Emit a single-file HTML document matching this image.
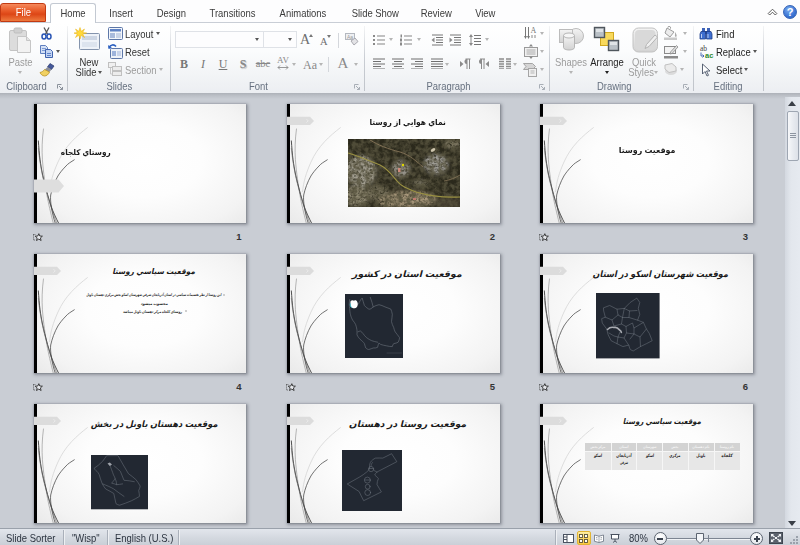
<!DOCTYPE html>
<html><head><meta charset="utf-8"><title>Slide Sorter</title>
<style>
html,body{margin:0;padding:0;}
body{width:800px;height:545px;overflow:hidden;position:relative;background:#c9cdd4;font-family:"Liberation Sans","DejaVu Sans",sans-serif;font-size:11px;color:#333;}
.abs{position:absolute;}
#tabs{position:absolute;left:0;top:0;width:800px;height:22px;background:#fdfdfe;}
#ribbon{position:absolute;left:0;top:22px;width:800px;height:71px;background:linear-gradient(#ffffff 0%,#fbfcfd 40%,#f2f4f6 75%,#eceef2 100%);border-top:1px solid #c9ced6;box-sizing:border-box;}
#under{position:absolute;left:0;top:93px;width:800px;height:6px;background:linear-gradient(#adb1b8 0%,#bcc0c7 45%,#c9cdd4 100%);}
.tab{position:absolute;top:3px;height:19px;line-height:20px;text-align:center;font-size:11px;color:#3a3a3a;}
#file{left:0;width:46px;top:3px;height:19px;border-radius:3px 3px 0 0;background:linear-gradient(#f5895c 0%,#e85a28 40%,#dd4616 60%,#ee7a3e 100%);color:#fff;border:1px solid #c23a12;box-sizing:border-box;line-height:17px;}
#home{left:50px;width:46px;height:20px;background:#fff;border:1px solid #c3c9d2;border-bottom:none;border-radius:3px 3px 0 0;box-sizing:border-box;line-height:19px;}
.sep{position:absolute;top:26px;height:65px;width:1px;background:linear-gradient(rgba(200,204,210,0.2),#c9cdd3 50%,#c0c4ca);}
.glabel{position:absolute;top:80px;height:13px;line-height:13px;font-size:11px;color:#66707f;text-align:center;}
.t{position:absolute;white-space:nowrap;line-height:13px;font-size:10.5px;transform:scaleX(.9);transform-origin:0 50%;}
.t[style*="text-align:center"]{transform-origin:50% 50%;}
.sx{display:inline-block;transform:scaleX(.9);transform-origin:50% 50%;font-size:10.5px;}
.dis{color:#9c9c9c;}
.ser{font-family:"Liberation Serif",serif;}
.arr{position:absolute;width:0;height:0;border-left:2.5px solid transparent;border-right:2.5px solid transparent;border-top:3px solid #555;}

.slide{position:absolute;width:212.5px;height:119px;overflow:hidden;background:radial-gradient(ellipse 78% 88% at 52% 47%,#ffffff 0%,#fdfdfd 35%,#f3f3f3 70%,#e3e3e3 100%);box-shadow:0 0 1.5px 0.5px rgba(80,85,95,.6),1px 1px 3px 1px rgba(80,85,95,.45);}
.bar{position:absolute;left:0;top:0;width:3.2px;height:120px;background:#000;}
.wisp{position:absolute;left:0;top:0;}
.ttl{position:absolute;white-space:nowrap;direction:rtl;font-family:"Liberation Sans","DejaVu Sans",sans-serif;font-weight:bold;color:#1a1a1a;line-height:20px;height:20px;transform-origin:100% 50%;}
.num{position:absolute;width:20px;text-align:right;font-weight:bold;font-size:9.500px;color:#333;line-height:13px;}
.bd{position:absolute;white-space:nowrap;direction:rtl;font-weight:bold;color:#2a2a2a;line-height:10px;height:10px;transform-origin:100% 50%;}
.cell{position:absolute;width:60px;text-align:center;white-space:nowrap;direction:rtl;font-weight:bold;line-height:10px;height:10px;transform-origin:50% 50%;}
</style></head><body>
<div id="tabs"></div>
<div id="ribbon"></div>
<div id="under"></div>
<div class="tab" id="file"><span class="sx">File</span></div>
<div class="tab" id="home"><span class="sx">Home</span></div>
<div class="tab" style="left:103px;width:36px"><span class="sx">Insert</span></div>
<div class="tab" style="left:151px;width:40px"><span class="sx">Design</span></div>
<div class="tab" style="left:202px;width:60px"><span class="sx">Transitions</span></div>
<div class="tab" style="left:274px;width:58px"><span class="sx">Animations</span></div>
<div class="tab" style="left:346px;width:58px"><span class="sx">Slide Show</span></div>
<div class="tab" style="left:416px;width:40px"><span class="sx">Review</span></div>
<div class="tab" style="left:470px;width:30px"><span class="sx">View</span></div>
<!--RIBBON-->
<!-- separators -->
<div class="sep" style="left:67px"></div><div class="sep" style="left:170px"></div><div class="sep" style="left:364px"></div><div class="sep" style="left:549px"></div><div class="sep" style="left:693px"></div><div class="sep" style="left:763px"></div>
<!-- group labels -->
<div class="glabel" style="left:0;width:52px"><span class="sx">Clipboard</span></div>
<div class="glabel" style="left:68px;width:102px"><span class="sx">Slides</span></div>
<div class="glabel" style="left:171px;width:176px"><span class="sx">Font</span></div>
<div class="glabel" style="left:365px;width:168px"><span class="sx">Paragraph</span></div>
<div class="glabel" style="left:550px;width:128px"><span class="sx">Drawing</span></div>
<div class="glabel" style="left:694px;width:69px"><span class="sx">Editing</span></div>
<!-- launchers -->
<svg class="abs" style="left:56px;top:83px" width="8" height="8" viewBox="0 0 8 8"><path d="M1.5 5.5V1.5H5.5" fill="none" stroke="#8a919b"/><path d="M3 3l3.5 3.5M6.5 4v2.5H4" fill="none" stroke="#8a919b"/></svg>
<svg class="abs" style="left:353px;top:83px" width="8" height="8" viewBox="0 0 8 8"><path d="M1.5 5.5V1.5H5.5" fill="none" stroke="#a8aeb6"/><path d="M3 3l3.5 3.5M6.5 4v2.5H4" fill="none" stroke="#a8aeb6"/></svg>
<svg class="abs" style="left:538px;top:83px" width="8" height="8" viewBox="0 0 8 8"><path d="M1.5 5.5V1.5H5.5" fill="none" stroke="#a8aeb6"/><path d="M3 3l3.5 3.5M6.5 4v2.5H4" fill="none" stroke="#a8aeb6"/></svg>
<svg class="abs" style="left:682px;top:83px" width="8" height="8" viewBox="0 0 8 8"><path d="M1.5 5.5V1.5H5.5" fill="none" stroke="#a8aeb6"/><path d="M3 3l3.5 3.5M6.5 4v2.5H4" fill="none" stroke="#a8aeb6"/></svg>
<!-- CLIPBOARD -->
<svg class="abs" style="left:8px;top:27px" width="25" height="27" viewBox="0 0 25 27">
 <rect x="1.5" y="3.5" width="17" height="20" rx="1.5" fill="#dcdcdc" stroke="#c4c4c4"/>
 <rect x="6" y="1" width="8" height="5" rx="1.5" fill="#cfcfcf" stroke="#bdbdbd"/>
 <path d="M9.5 9.500H18.500L22.500 13.500V25.500H9.500Z" fill="#f2f2f2" stroke="#c6c6c6"/>
 <path d="M18.500 9.500V13.500H22.500" fill="#e4e4e4" stroke="#c6c6c6"/>
</svg>
<div class="t dis" style="left:0;width:41px;text-align:center;top:56px">Paste</div>
<div class="arr dis" style="left:18px;top:71px;border-top-color:#b5b5b5"></div>
<svg class="abs" style="left:41px;top:27px" width="11" height="13" viewBox="0 0 11 13">
 <path d="M3 0.500L6.500 7M8 0.500L4.500 7" stroke="#555" stroke-width="1.300" fill="none"/>
 <ellipse cx="3" cy="9.500" rx="2" ry="2.500" fill="none" stroke="#2a56b5" stroke-width="1.500"/>
 <ellipse cx="8" cy="9.500" rx="2" ry="2.500" fill="none" stroke="#2a56b5" stroke-width="1.500"/>
</svg>
<svg class="abs" style="left:39px;top:45px" width="15" height="13" viewBox="0 0 15 13">
 <path d="M1.500 0.500H6.500L8.500 2.500V8.500H1.500Z" fill="#d4e0f5" stroke="#5f7fbf"/><path d="M3 3.500h4M3 5.500h4" stroke="#7d9ad3"/>
 <path d="M6.500 4.500H11.500L13.500 6.500V12.500H6.500Z" fill="#c3d4f2" stroke="#3f62ad"/>
 <path d="M8 8.500h4M8 10.500h4" stroke="#5f82c9"/>
</svg>
<div class="arr" style="left:56px;top:50px"></div>
<svg class="abs" style="left:39px;top:62px" width="17" height="15" viewBox="0 0 17 15">
 <path d="M11 1.500l4 2.500-2.500 3.500-4-2.500z" fill="#44589a" stroke="#2b3a6d" stroke-width=".7"/>
 <path d="M8.500 5l4 2.500-2 2.500-5-2z" fill="#8d8f99"/>
 <path d="M5.500 7.500l5 2.500c-1 2.500-3 4-5 4-2-.2-4-1.800-4.500-3.500 2-.5 3.500-1.500 4.500-3z" fill="#f1d162" stroke="#b99222" stroke-width=".8"/>
</svg>
<!-- SLIDES -->
<svg class="abs" style="left:74px;top:27px" width="28" height="25" viewBox="0 0 28 25">
 <rect x="5.500" y="6.500" width="20" height="16" rx="1" fill="#eef2f8" stroke="#8494ad"/>
 <rect x="8" y="9" width="15" height="4" fill="#cdd6e4"/><rect x="8" y="15" width="15" height="5" fill="#dde4ee"/>
 <path d="M6 0.500l1.200 3.800 3.300-2.300-1.800 3.500 4 .5-4 1 1.800 3.500-3.300-2.300-1.200 3.800-1.200-3.800-3.300 2.300 1.800-3.500-3.800-1 3.800-.5-1.800-3.500 3.300 2.300z" fill="#ffd93b" stroke="#e8b010" stroke-width=".5"/>
</svg>
<div class="t" style="left:68px;width:42px;text-align:center;top:56px">New</div>
<div class="t" style="left:68px;width:36px;text-align:center;top:66px">Slide</div>
<div class="arr" style="left:98px;top:71px"></div>
<svg class="abs" style="left:108px;top:27px" width="15" height="13" viewBox="0 0 15 13">
 <rect x="0.500" y="0.500" width="14" height="12" rx="1" fill="#f3f6fb" stroke="#5d77a8"/>
 <rect x="2" y="2" width="11" height="2.500" fill="#5f82c4"/><rect x="2" y="6" width="5" height="5" fill="#a9bbdc"/><rect x="8" y="6" width="5" height="5" fill="#c9d4e8"/>
</svg>
<div class="t" style="left:125px;top:28px">Layout</div><div class="arr" style="left:156px;top:32px"></div>
<svg class="abs" style="left:108px;top:44px" width="15" height="15" viewBox="0 0 15 15">
 <rect x="2.500" y="4.500" width="12" height="10" rx="1" fill="#eef2f8" stroke="#5d77a8"/>
 <rect x="4" y="7" width="4" height="5" fill="#9db3db"/><rect x="9" y="7" width="4" height="5" fill="#c7d3ea"/>
 <path d="M1 3.500c1.500-3 5-3.500 7-1" fill="none" stroke="#2a5fc0" stroke-width="1.600"/><path d="M0 1l.5 4 3.500-1z" fill="#2a5fc0"/>
</svg>
<div class="t" style="left:125px;top:46px">Reset</div>
<svg class="abs" style="left:108px;top:62px" width="15" height="15" viewBox="0 0 15 15">
 <rect x="0.500" y="0.500" width="7" height="5" fill="#f0f0f0" stroke="#c0c0c0"/>
 <rect x="4.500" y="4.500" width="9" height="4" fill="#ececec" stroke="#c0c0c0"/>
 <rect x="4.500" y="9.500" width="9" height="4" fill="#ececec" stroke="#c0c0c0"/>
 <path d="M2.500 6v6h2" fill="none" stroke="#c8c8c8"/>
</svg>
<div class="t dis" style="left:125px;top:64px">Section</div><div class="arr" style="left:159px;top:68px;border-top-color:#b5b5b5"></div>
<!-- FONT -->
<div class="abs" style="left:175px;top:31px;width:122px;height:17px;box-sizing:border-box;border:1px solid #dfe2e7;background:#fdfdfe"></div>
<div class="abs" style="left:263px;top:32px;width:1px;height:15px;background:#dfe2e7"></div>
<div class="arr" style="left:255px;top:38px"></div><div class="arr" style="left:288px;top:38px"></div>
<div class="abs ser" style="left:300px;top:33px;font-size:14px;color:#6e6e6e;line-height:14px">A</div>
<div class="abs" style="left:309px;top:34px;width:0;height:0;border-left:2px solid transparent;border-right:2px solid transparent;border-bottom:3px solid #777"></div>
<div class="abs ser" style="left:320px;top:36px;font-size:10.500px;color:#6e6e6e;line-height:11px">A</div>
<div class="abs" style="left:327px;top:35px;width:0;height:0;border-left:2px solid transparent;border-right:2px solid transparent;border-top:3px solid #777"></div>
<div class="abs" style="left:338px;top:33px;width:1px;height:15px;background:#d4d7dc"></div>
<svg class="abs" style="left:344px;top:32px" width="15" height="15" viewBox="0 0 15 15">
 <rect x="1.500" y="1.500" width="9" height="6" fill="#eef0f3" stroke="#b4b8bf"/><text x="3" y="7" font-size="5" font-family="Liberation Sans" fill="#999">Aa</text>
 <path d="M7 9l4-3 3 3.500-4 3.500z" fill="#e3e3e6" stroke="#a9a9b0"/>
</svg>
<div class="abs ser" style="left:179px;top:57px;width:10px;text-align:center;font-weight:bold;font-size:12px;color:#777;line-height:14px">B</div>
<div class="abs ser" style="left:198px;top:57px;width:10px;text-align:center;font-style:italic;font-size:12px;color:#777;line-height:14px">I</div>
<div class="abs ser" style="left:218px;top:57px;width:10px;text-align:center;text-decoration:underline;font-size:12px;color:#777;line-height:14px">U</div>
<div class="abs ser" style="left:238px;top:57px;width:10px;text-align:center;font-weight:bold;font-size:12px;color:#888;line-height:14px;text-shadow:1px 1px 1px #bbb">S</div>
<div class="abs ser" style="left:255px;top:57px;width:16px;text-align:center;text-decoration:line-through;font-size:10.500px;color:#888;line-height:14px">abc</div>
<div class="abs ser" style="left:276px;top:55px;width:14px;text-align:center;font-size:9px;color:#888;line-height:10px">AV</div>
<svg class="abs" style="left:277px;top:65px" width="12" height="5" viewBox="0 0 12 5"><path d="M1 2.500h10M3 0.500l-2 2 2 2M9 0.500l2 2-2 2" fill="none" stroke="#8d8d8d" stroke-width=".9"/></svg>
<div class="arr" style="left:292px;top:63px;border-top-color:#b5b5b5"></div>
<div class="abs ser" style="left:302px;top:58px;width:16px;text-align:center;font-size:12px;color:#888;line-height:14px">Aa</div>
<div class="arr" style="left:319px;top:63px;border-top-color:#b5b5b5"></div>
<div class="abs" style="left:328px;top:57px;width:1px;height:15px;background:#d4d7dc"></div>
<div class="abs ser" style="left:336px;top:55px;width:14px;text-align:center;font-size:15px;color:#8a8a8a;line-height:16px">A</div>
<div class="arr" style="left:354px;top:63px;border-top-color:#b5b5b5"></div>
<!-- PARAGRAPH row 1 -->
<svg class="abs" style="left:373px;top:34px" width="12" height="12" viewBox="0 0 12 12"><g fill="#8a8a8a"><rect x="0" y="1" width="2" height="2"/><rect x="0" y="5" width="2" height="2"/><rect x="0" y="9" width="2" height="2"/></g><path d="M4 2h8M4 6h8M4 10h8" stroke="#858585"/></svg>
<div class="arr" style="left:389px;top:38px;border-top-color:#b5b5b5"></div>
<svg class="abs" style="left:400px;top:34px" width="13" height="12" viewBox="0 0 13 12"><g fill="#8a8a8a"><rect x="0.500" y="0.500" width="1.500" height="3"/><rect x="0" y="4.500" width="2" height="3"/><rect x="0" y="8.500" width="2" height="3"/></g><path d="M4 2h8M4 6h8M4 10h8" stroke="#858585"/></svg>
<div class="arr" style="left:417px;top:38px;border-top-color:#b5b5b5"></div>
<svg class="abs" style="left:431px;top:34px" width="13" height="12" viewBox="0 0 13 12"><path d="M1 1h11M5 3.500h7M5 6h7M5 8.500h7M1 11h11" stroke="#777"/><path d="M3.500 3.500v5L0.500 6z" fill="#8a8a8a"/></svg>
<svg class="abs" style="left:449px;top:34px" width="13" height="12" viewBox="0 0 13 12"><path d="M1 1h11M5 3.500h7M5 6h7M5 8.500h7M1 11h11" stroke="#777"/><path d="M0.500 3.500v5L3.500 6z" fill="#8a8a8a"/></svg>
<svg class="abs" style="left:469px;top:33px" width="12" height="14" viewBox="0 0 12 14"><path d="M5 2.500h7M5 5.500h7M5 8.500h7M5 11.500h7" stroke="#777"/><path d="M2 1l2 3h-4zM2 13l2-3h-4z" fill="#8a8a8a"/><path d="M2 3v8" stroke="#8a8a8a"/></svg>
<div class="arr" style="left:485px;top:38px;border-top-color:#b5b5b5"></div>
<!-- PARAGRAPH row 2 -->
<svg class="abs" style="left:373px;top:58px" width="12" height="11" viewBox="0 0 12 11"><path d="M0 1h12M0 3.500h8M0 6h12M0 8.500h8M0 11h12" stroke="#6f6f6f" stroke-width="1.15"/></svg>
<svg class="abs" style="left:392px;top:58px" width="12" height="11" viewBox="0 0 12 11"><path d="M0 1h12M2 3.500h8M0 6h12M2 8.500h8M0 11h12" stroke="#6f6f6f" stroke-width="1.15"/></svg>
<svg class="abs" style="left:411px;top:58px" width="12" height="11" viewBox="0 0 12 11"><path d="M0 1h12M4 3.500h8M0 6h12M4 8.500h8M0 11h12" stroke="#6f6f6f" stroke-width="1.15"/></svg>
<svg class="abs" style="left:431px;top:58px" width="12" height="11" viewBox="0 0 12 11"><path d="M0 1h12M0 3.500h12M0 6h12M0 8.500h12M0 11h12" stroke="#6f6f6f" stroke-width="1.15"/></svg>
<div class="arr" style="left:445px;top:63px;border-top-color:#b5b5b5"></div>
<svg class="abs" style="left:459px;top:58px" width="12" height="12" viewBox="0 0 12 12"><path d="M1 3l3.500 3-3.500 3z" fill="#8a8a8a"/><path d="M8 1v10M10.500 1v10M6.500 1h5" stroke="#8a8a8a"/><path d="M8 1a2.500 2.500 0 0 0 0 5z" fill="#8a8a8a"/></svg>
<svg class="abs" style="left:478px;top:58px" width="12" height="12" viewBox="0 0 12 12"><path d="M11 3l-3.500 3 3.500 3z" fill="#8a8a8a"/><path d="M3.500 1v10M6 1v10M2 1h5" stroke="#8a8a8a"/><path d="M3.500 1a2.500 2.500 0 0 0 0 5z" fill="#8a8a8a"/></svg>
<svg class="abs" style="left:499px;top:58px" width="12" height="11" viewBox="0 0 12 11"><path d="M0 1h5M0 3.500h5M0 6h5M0 8.500h5M0 11h5M7 1h5M7 3.500h5M7 6h5M7 8.500h5M7 11h5" stroke="#8c8c8c" stroke-width="1.300"/></svg>
<div class="arr" style="left:513px;top:63px;border-top-color:#b5b5b5"></div>
<!-- PARAGRAPH right column -->
<svg class="abs" style="left:524px;top:26px" width="14" height="14" viewBox="0 0 14 14"><path d="M1.500 1v10M4.500 1v10" stroke="#777"/><path d="M1.500 13l-1.500-3h3zM4.500 13l-1.500-3h3z" fill="#777"/><text x="6.500" y="7" font-size="8" font-family="Liberation Serif" fill="#777">A</text><path d="M8 9v3M11 9v3" stroke="#888"/></svg>
<div class="arr" style="left:540px;top:32px;border-top-color:#b5b5b5"></div>
<svg class="abs" style="left:524px;top:44px" width="14" height="15" viewBox="0 0 14 15"><rect x="0.500" y="3.500" width="13" height="9" fill="#f1f1f1" stroke="#9a9a9a"/><path d="M2.500 6h9M2.500 8h9M2.500 10h9" stroke="#aaa"/><path d="M7 0l2 2.500h-4zM7 15l2-2.500h-4z" fill="#888"/></svg>
<div class="arr" style="left:540px;top:50px;border-top-color:#b5b5b5"></div>
<svg class="abs" style="left:523px;top:62px" width="15" height="15" viewBox="0 0 15 15"><path d="M0.500 1.500h9l3 3-3 3h-9l2.500-3z" fill="#d5d5d5" stroke="#a5a5a5"/><rect x="5.500" y="6.500" width="8" height="8" fill="#f0f0f0" stroke="#a5a5a5"/><path d="M7.500 9h4M7.500 11h4" stroke="#b5b5b5"/></svg>
<div class="arr" style="left:540px;top:68px;border-top-color:#b5b5b5"></div>
<!-- DRAWING -->
<svg class="abs" style="left:558px;top:27px" width="27" height="25" viewBox="0 0 27 25">
 <defs><linearGradient id="gs" x1="0" y1="0" x2="0" y2="1"><stop offset="0" stop-color="#f4f4f4"/><stop offset="1" stop-color="#d2d2d2"/></linearGradient></defs>
 <circle cx="18" cy="9" r="7.500" fill="url(#gs)" stroke="#bdbdbd"/>
 <rect x="1.500" y="2.500" width="13" height="13" fill="url(#gs)" stroke="#bcbcbc"/>
 <path d="M5.500 8.500v12a5.500 2.500 0 0 0 11 0v-12" fill="url(#gs)" stroke="#b5b5b5"/><ellipse cx="11" cy="8.500" rx="5.500" ry="2.500" fill="#f6f6f6" stroke="#b5b5b5"/>
</svg>
<div class="t dis" style="left:551px;width:40px;text-align:center;top:56px">Shapes</div>
<div class="arr" style="left:569px;top:71px;border-top-color:#b5b5b5"></div>
<svg class="abs" style="left:593px;top:26px" width="28" height="27" viewBox="0 0 28 27">
 <rect x="7.500" y="6.500" width="13" height="13" fill="#f8d95c" stroke="#d1a81f"/>
 <rect x="1.500" y="1.500" width="10" height="10" fill="#b9c0c6" stroke="#4f565d" stroke-width="1.400"/><rect x="3" y="3" width="7" height="3" fill="#dfe3e6"/>
 <rect x="15.500" y="14.500" width="10" height="10" fill="#b9c0c6" stroke="#4f565d" stroke-width="1.400"/><rect x="17" y="16" width="7" height="3" fill="#dfe3e6"/>
</svg>
<div class="t" style="left:585px;width:44px;text-align:center;top:56px;color:#222">Arrange</div>
<div class="arr" style="left:605px;top:71px;border-top-color:#222"></div>
<svg class="abs" style="left:632px;top:27px" width="27" height="26" viewBox="0 0 27 26">
 <rect x="1" y="1" width="24.500" height="24" rx="5.500" fill="url(#gs)" stroke="#c2c2c2"/><rect x="3" y="3" width="20.500" height="20" rx="4" fill="#d9d9d9"/>
 <path d="M23 8l2.500 2-8.500 9.500-4 2 1.500-4z" fill="#efefef" stroke="#b5b5b5"/>
</svg>
<div class="t dis" style="left:624px;width:40px;text-align:center;top:56px">Quick</div>
<div class="t dis" style="left:622px;width:38px;text-align:center;top:66px">Styles</div>
<div class="arr" style="left:654px;top:71px;border-top-color:#b5b5b5"></div>
<svg class="abs" style="left:663px;top:26px" width="16" height="14" viewBox="0 0 16 14"><path d="M4 2l7 4-4 5-5-4z" fill="#ececec" stroke="#9d9d9d"/><path d="M5 1.500c0-2 3-1.500 2.500 1" fill="none" stroke="#888"/><path d="M12 6c1.500 2 2 3.500 1.500 4.500-1 .8-2 0-1.500-1.500z" fill="#aaa"/><rect x="1" y="11.500" width="13" height="2.500" fill="#c9c9c9"/></svg>
<div class="arr" style="left:683px;top:32px;border-top-color:#b5b5b5"></div>
<svg class="abs" style="left:663px;top:45px" width="16" height="14" viewBox="0 0 16 14"><rect x="1.500" y="1.500" width="11" height="7" fill="#f3f3f3" stroke="#8a8a8a"/><path d="M13.500 0.500l1.500 1.500-6 6.500-2 .5.500-2z" fill="#ddd" stroke="#8a8a8a" stroke-width=".8"/><rect x="1" y="11" width="14" height="2.500" fill="#8a8a8a"/></svg>
<div class="arr" style="left:683px;top:50px;border-top-color:#b5b5b5"></div>
<svg class="abs" style="left:663px;top:62px" width="15" height="14" viewBox="0 0 15 14"><ellipse cx="8" cy="9" rx="6" ry="4" fill="#d0d0d0" opacity=".7"/><path d="M2 3l7-1.500 4 3.500v4l-7 1.500-4-3.500z" fill="#ebebeb" stroke="#c1c1c1"/></svg>
<div class="arr" style="left:680px;top:68px;border-top-color:#b5b5b5"></div>
<!-- EDITING -->
<svg class="abs" style="left:699px;top:27px" width="14" height="13" viewBox="0 0 14 13">
 <path d="M3 1h3v4h-3zM8 1h3v4h-3z" fill="#3d63b8"/><path d="M5.500 4h3v3h-3z" fill="#24427f"/>
 <path d="M2 4.500h4.500v7.500h-5.500v-5zM12 4.500h-4.500v7.500h5.500v-5z" fill="#3f6fd0" stroke="#1f3f8a" stroke-width=".8"/>
 <path d="M2.500 7v4M9 7v4" stroke="#b9cdf2"/>
</svg>
<div class="t" style="left:716px;top:28px;color:#222">Find</div>
<svg class="abs" style="left:699px;top:45px" width="15" height="14" viewBox="0 0 15 14">
 <text x="1" y="6" font-size="7.500" font-family="Liberation Serif" fill="#444">ab</text>
 <text x="6" y="13" font-size="7.500" font-weight="bold" font-family="Liberation Sans" fill="#2f8a2f">ac</text>
 <path d="M2 7.500v3.500h3M3.500 9.500l1.500 1.500-1.500 1.500" fill="none" stroke="#3a5fb0" stroke-width=".9"/>
</svg>
<div class="t" style="left:716px;top:46px;color:#222">Replace</div><div class="arr" style="left:753px;top:50px"></div>
<svg class="abs" style="left:701px;top:63px" width="10" height="14" viewBox="0 0 10 14"><path d="M1.500 1v10l2.500-2.500 2 4.500 1.500-.7-2-4.300h3.500z" fill="#fff" stroke="#4a5568" stroke-width=".9"/></svg>
<div class="t" style="left:716px;top:64px;color:#222">Select</div><div class="arr" style="left:744px;top:68px"></div>
<!-- help + caret -->
<svg class="abs" style="left:767px;top:6px" width="11" height="11" viewBox="0 0 11 11"><path d="M1.200 7.500L5.500 3.200L9.800 7.500L8.300 9L5.500 6.200L2.700 9Z" fill="#fff" stroke="#4a4a4a" stroke-width=".9" stroke-linejoin="round"/></svg>
<div class="abs" style="left:783px;top:5px;width:14px;height:14px;border-radius:50%;background:radial-gradient(circle at 40% 30%,#7fb0f0,#3b74d4 60%,#2a5cba);border:1px solid #3563b5;box-sizing:border-box;color:#fff;font-weight:bold;font-size:11px;line-height:12px;text-align:center">?</div>
<!--RIBBON4-->
<!--SLIDES-->
<div class="slide" style="left:33.5px;top:104.3px"><div class="bar"></div><svg class="wisp" width="70" height="120" viewBox="0 0 70 120"><path d="M53.700 23.400C43 31.700 31 42 24 58C19 69 16.500 78 15.500 88" fill="none" stroke="#d9d9d9" stroke-width=".9"/><path d="M9.500 24.600C8 36 7.800 46 8.400 55.600C9.500 70 11.500 82 13 91.400C14.500 100 16.500 108 19.500 120" fill="none" stroke="#888" stroke-width=".6"/><path d="M4.300 36.500C4.800 43 5.300 50 6 55.600C7.500 66 9 73 10.700 79.500C12.500 87 14.500 94 16.700 101C19 108 22 114 25 120" fill="none" stroke="#333" stroke-width=".85"/><path d="M4.300 44C5.500 56 7.500 68 10 78C13 90 17 104 23 120" fill="none" stroke="#666" stroke-width=".6"/><path d="M40.600 55.600C37 58 34 59.500 32 62C28 66 25.500 69.500 23.900 72C20.500 78 18 85 16.700 91C16 96 17.500 108 21.500 120" fill="none" stroke="#444" stroke-width=".75"/></svg><svg class="abs" style="left:0;top:75px" width="32" height="14" viewBox="0 0 32 14"><path d="M0 0.500H24.500L30 7L24.500 13.500H0Z" fill="#dedede"/></svg><div class="ttl" style="right:135.7px;top:38.4px;font-size:8px;transform:scaleX(0.911)">روستاي كلجاه</div></div>
<div class="slide" style="left:287px;top:104.3px"><div class="bar"></div><svg class="wisp" width="70" height="120" viewBox="0 0 70 120"><path d="M53.700 23.400C43 31.700 31 42 24 58C19 69 16.500 78 15.500 88" fill="none" stroke="#d9d9d9" stroke-width=".9"/><path d="M9.500 24.600C8 36 7.800 46 8.400 55.600C9.500 70 11.500 82 13 91.400C14.500 100 16.500 108 19.500 120" fill="none" stroke="#888" stroke-width=".6"/><path d="M4.300 36.500C4.800 43 5.300 50 6 55.600C7.500 66 9 73 10.700 79.500C12.500 87 14.500 94 16.700 101C19 108 22 114 25 120" fill="none" stroke="#333" stroke-width=".85"/><path d="M4.300 44C5.500 56 7.500 68 10 78C13 90 17 104 23 120" fill="none" stroke="#666" stroke-width=".6"/><path d="M40.600 55.600C37 58 34 59.500 32 62C28 66 25.500 69.500 23.900 72C20.500 78 18 85 16.700 91C16 96 17.500 108 21.500 120" fill="none" stroke="#444" stroke-width=".75"/></svg><svg class="abs" style="left:0;top:12px" width="29" height="10" viewBox="0 0 29 10"><path d="M0 0.800H23L27 4.900L23 9H0Z" fill="#dcdcdc"/><path d="M19.500 3.200l1.700 1.700-1.700 1.700" fill="none" stroke="#efefef" stroke-width=".8"/></svg><div class="ttl" style="right:53.5px;top:8.4px;font-size:8px;transform:scaleX(0.945)">نماي هوايي از روستا</div><svg class="abs" style="left:61px;top:35px" width="112" height="68" viewBox="0 0 112 68">
<defs>
<filter id="nzd" x="0" y="0" width="100%" height="100%"><feTurbulence type="fractalNoise" baseFrequency="0.22" numOctaves="3" seed="3" result="n"/><feColorMatrix in="n" type="matrix" values="0 0 0 0 0.100  0 0 0 0 0.090  0 0 0 0 0.050  0 2.2 1.6 0 -1.400"/></filter>
<filter id="tex" x="-10%" y="-10%" width="120%" height="120%"><feGaussianBlur in="SourceGraphic" stdDeviation="1.6" result="b"/><feTurbulence type="fractalNoise" baseFrequency="0.45" numOctaves="2" seed="11" result="n"/><feColorMatrix in="n" type="matrix" values="0 0 0 0 0  0 0 0 0 0  0 0 0 0 0  2.6 1.4 0 0 -1.250" result="na"/><feComposite in="b" in2="na" operator="in"/></filter>
<filter id="bl"><feGaussianBlur stdDeviation="2"/></filter>
<filter id="bl1"><feGaussianBlur stdDeviation="0.3"/></filter>
<clipPath id="c2"><rect width="112" height="68"/></clipPath>
</defs>
<g clip-path="url(#c2)">
<rect width="112" height="68" fill="#2b291c"/>
<g filter="url(#bl)" opacity=".55">
<ellipse cx="14" cy="34" rx="16" ry="16" fill="#6b6758"/>
<ellipse cx="10" cy="58" rx="14" ry="10" fill="#5e5946"/>
<ellipse cx="53" cy="30" rx="10" ry="9" fill="#5d5a4e"/>
<ellipse cx="88" cy="26" rx="13" ry="11" fill="#63615a"/>
<ellipse cx="62" cy="60" rx="28" ry="9" fill="#7c6f59"/>
<ellipse cx="100" cy="64" rx="14" ry="5" fill="#5a5040"/>
</g>
<g filter="url(#tex)">
<ellipse cx="13" cy="32" rx="15" ry="16" fill="#a19d8f"/>
<ellipse cx="8" cy="57" rx="13" ry="10" fill="#8f8972"/>
<ellipse cx="30" cy="54" rx="11" ry="8" fill="#77715b"/>
<ellipse cx="53" cy="30" rx="9" ry="9" fill="#96938a"/>
<ellipse cx="88" cy="25" rx="12" ry="10" fill="#a3a19b"/>
<ellipse cx="62" cy="60" rx="26" ry="8" fill="#a9987c"/>
<ellipse cx="40" cy="62" rx="10" ry="6" fill="#9c8e72"/>
<ellipse cx="104" cy="5" rx="8" ry="5" fill="#7d7762"/>
<ellipse cx="72" cy="44" rx="8" ry="4" fill="#6e6a58"/>
</g>
<rect width="112" height="68" filter="url(#nzd)" opacity=".8"/>
<g filter="url(#bl1)" fill="none">
<path d="M0 14C10 17 22 22 32 26C40 30 44 36 49 42C54 48 60 50 68 53C78 56 92 59 112 58" stroke="#9a9142" stroke-width="1.150"/>
<path d="M22 1C30 6 40 10 52 13C62 16 68 22 75 28" stroke="#8f7c5e" stroke-width=".8"/>
<path d="M96 42C102 41 107 39 112 36" stroke="#8f7c5e" stroke-width=".7"/>
</g>
<circle cx="55" cy="26" r="1.200" fill="#e0d800"/><rect x="50" y="29" width="2.500" height="4" fill="#cf8a7c"/><rect x="65" y="59" width="3" height="2" fill="#c07a6e"/>
<ellipse cx="85" cy="11" rx="2.500" ry="1.500" fill="#cfc6ae" transform="rotate(-30 85 11)"/>
</g>
</svg></div>
<div class="slide" style="left:540px;top:104.3px"><div class="bar"></div><svg class="wisp" width="70" height="120" viewBox="0 0 70 120"><path d="M53.700 23.400C43 31.700 31 42 24 58C19 69 16.500 78 15.500 88" fill="none" stroke="#d9d9d9" stroke-width=".9"/><path d="M9.500 24.600C8 36 7.800 46 8.400 55.600C9.500 70 11.500 82 13 91.400C14.500 100 16.500 108 19.500 120" fill="none" stroke="#888" stroke-width=".6"/><path d="M4.300 36.500C4.800 43 5.300 50 6 55.600C7.500 66 9 73 10.700 79.500C12.500 87 14.500 94 16.700 101C19 108 22 114 25 120" fill="none" stroke="#333" stroke-width=".85"/><path d="M4.300 44C5.500 56 7.500 68 10 78C13 90 17 104 23 120" fill="none" stroke="#666" stroke-width=".6"/><path d="M40.600 55.600C37 58 34 59.500 32 62C28 66 25.500 69.500 23.900 72C20.500 78 18 85 16.700 91C16 96 17.500 108 21.500 120" fill="none" stroke="#444" stroke-width=".75"/></svg><svg class="abs" style="left:0;top:12px" width="29" height="10" viewBox="0 0 29 10"><path d="M0 0.800H23L27 4.900L23 9H0Z" fill="#dcdcdc"/><path d="M19.500 3.200l1.700 1.700-1.700 1.700" fill="none" stroke="#efefef" stroke-width=".8"/></svg><div class="ttl" style="right:77.5px;top:36.4px;font-size:8px;transform:scaleX(0.986)">موقعيت روستا</div></div>
<div class="slide" style="left:33.5px;top:254.3px"><div class="bar"></div><svg class="wisp" width="70" height="120" viewBox="0 0 70 120"><path d="M53.700 23.400C43 31.700 31 42 24 58C19 69 16.500 78 15.500 88" fill="none" stroke="#d9d9d9" stroke-width=".9"/><path d="M9.500 24.600C8 36 7.800 46 8.400 55.600C9.500 70 11.500 82 13 91.400C14.500 100 16.500 108 19.500 120" fill="none" stroke="#888" stroke-width=".6"/><path d="M4.300 36.500C4.800 43 5.300 50 6 55.600C7.500 66 9 73 10.700 79.500C12.500 87 14.500 94 16.700 101C19 108 22 114 25 120" fill="none" stroke="#333" stroke-width=".85"/><path d="M4.300 44C5.500 56 7.500 68 10 78C13 90 17 104 23 120" fill="none" stroke="#666" stroke-width=".6"/><path d="M40.600 55.600C37 58 34 59.500 32 62C28 66 25.500 69.500 23.900 72C20.500 78 18 85 16.700 91C16 96 17.500 108 21.500 120" fill="none" stroke="#444" stroke-width=".75"/></svg><svg class="abs" style="left:0;top:12px" width="29" height="10" viewBox="0 0 29 10"><path d="M0 0.800H23L27 4.900L23 9H0Z" fill="#dcdcdc"/><path d="M19.500 3.200l1.700 1.700-1.700 1.700" fill="none" stroke="#efefef" stroke-width=".8"/></svg><div class="ttl" style="right:50.3px;top:7.9px;font-size:7.8px;transform:scaleX(0.946) skewX(-14deg)">موقعيت سياسي روستا</div><div class="bd" style="right:25.0px;top:36.0px;font-size:4px;transform:scaleX(0.654) skewX(-10deg)">اين روستا از نظر تقسيمات سياسي در استان آذربايجان شرقي شهرستان اسكو بخش مركزي دهستان باونل</div><div class="bd" style="right:78.0px;top:45.0px;font-size:4px;transform:scaleX(0.906) skewX(-10deg)">محسوب ميشود</div><div class="bd" style="right:64.0px;top:52.6px;font-size:4px;transform:scaleX(0.728) skewX(-10deg)">روستاي كلجاه مركز دهستان باونل ميباشد</div><div class="abs" style="left:189px;top:39.500px;width:2px;height:2px;background:#cfcfcf"></div><div class="abs" style="left:151px;top:56px;width:2px;height:2px;background:#cfcfcf"></div></div>
<div class="slide" style="left:287px;top:254.3px"><div class="bar"></div><svg class="wisp" width="70" height="120" viewBox="0 0 70 120"><path d="M53.700 23.400C43 31.700 31 42 24 58C19 69 16.500 78 15.500 88" fill="none" stroke="#d9d9d9" stroke-width=".9"/><path d="M9.500 24.600C8 36 7.800 46 8.400 55.600C9.500 70 11.500 82 13 91.400C14.500 100 16.500 108 19.500 120" fill="none" stroke="#888" stroke-width=".6"/><path d="M4.300 36.500C4.800 43 5.300 50 6 55.600C7.500 66 9 73 10.700 79.500C12.500 87 14.500 94 16.700 101C19 108 22 114 25 120" fill="none" stroke="#333" stroke-width=".85"/><path d="M4.300 44C5.500 56 7.500 68 10 78C13 90 17 104 23 120" fill="none" stroke="#666" stroke-width=".6"/><path d="M40.600 55.600C37 58 34 59.500 32 62C28 66 25.500 69.500 23.900 72C20.500 78 18 85 16.700 91C16 96 17.500 108 21.500 120" fill="none" stroke="#444" stroke-width=".75"/></svg><svg class="abs" style="left:0;top:12px" width="29" height="10" viewBox="0 0 29 10"><path d="M0 0.800H23L27 4.900L23 9H0Z" fill="#dcdcdc"/><path d="M19.500 3.200l1.700 1.700-1.700 1.700" fill="none" stroke="#efefef" stroke-width=".8"/></svg><div class="ttl" style="right:37.1px;top:9.7px;font-size:9px;transform:scaleX(1.049) skewX(-14deg)">موقعيت استان در كشور</div><svg class="abs" style="left:58px;top:40px" width="58" height="64" viewBox="0 0 58 64"><rect width="58" height="64" fill="#222832"/>
<g fill="none" stroke="#747a84" stroke-width=".55" stroke-linejoin="round" stroke-linecap="round">
<path d="M4.700 5.600C4 9 4.200 12 4.700 14.400C4.800 17 5 19 5.400 20.300C6 23 6.800 24.500 7.600 26.100C9 28 10 29 10.600 30.500C11.500 33 11.800 35 12 36.400C12 38 12 39.500 12 40.800C13 43 14 44 15 45.200C17 47 18.500 48 19.400 49.600C20 51.500 20.300 53 20.800 54C22 55 23 55.500 23.800 55.500C25.500 55 27 54.500 28.200 54C30 54 31.500 54 32.600 53.300C33 51.500 33.300 50 34 48.900C34.500 49.500 35 50 35.500 50.400C37.500 51 39.500 51.500 41.400 51.800C43.500 52.300 45.500 52.600 47.300 52.600C47.500 51.500 48 50.500 48.700 49.600C50.500 49.300 52 49 53.200 48.200C54 46.500 54.500 45 54.600 43.700C53 41.500 51.500 39.500 50.200 37.900C49.500 36.500 49 35 48.700 33.500C47.500 31.500 47 29.500 46.500 27.600C46.800 25 47.200 22.500 47.300 20.300C47 18.500 46.500 16.500 45.800 15.100C44 14.500 42 13.500 40 12.900C38 12 36 11 34 10.700C32 11 30 12 28.200 12.900C26.500 14.500 25 15.500 23.800 15.100C22 14 20.500 13 19.400 11.500C18.500 9 18 6.500 17.200 4.100C15.500 5.500 14.500 8 13.500 10"/>
<path d="M28.200 12.900C27.500 10 26.500 6.500 25.300 3.400"/>
<path d="M12.800 37.900C13.800 37.300 14.800 37 15.700 37.100C16.500 37.800 17.200 38.500 17.900 39.400C19 41 20.300 42.500 21.600 43.700C23.500 45 25 46 26.700 46.700C28.500 47.300 30.500 47.800 32.600 48.200"/>
<path d="M42 59h14.500" stroke="#5d636d" stroke-width=".4"/>
</g>
<path d="M5.600 7c1-1 2.500-1 3.500-.3 1.200-.8 2.800-.2 3.200 1.300.8 1.500.6 3.300-.2 4.700-1 1.300-2.500 1.800-4 1.500-1.300-.3-2.300-1.500-2.500-3-.3-1.500-.3-3 0-4.200z" fill="#ffffff"/><path d="M5.300 9.500c-.2 1.500.2 3.300 1.300 4.200" fill="none" stroke="#38d0e0" stroke-width=".9"/>
</svg></div>
<div class="slide" style="left:540px;top:254.3px"><div class="bar"></div><svg class="wisp" width="70" height="120" viewBox="0 0 70 120"><path d="M53.700 23.400C43 31.700 31 42 24 58C19 69 16.500 78 15.500 88" fill="none" stroke="#d9d9d9" stroke-width=".9"/><path d="M9.500 24.600C8 36 7.800 46 8.400 55.600C9.500 70 11.500 82 13 91.400C14.500 100 16.500 108 19.500 120" fill="none" stroke="#888" stroke-width=".6"/><path d="M4.300 36.500C4.800 43 5.300 50 6 55.600C7.500 66 9 73 10.700 79.500C12.500 87 14.500 94 16.700 101C19 108 22 114 25 120" fill="none" stroke="#333" stroke-width=".85"/><path d="M4.300 44C5.500 56 7.500 68 10 78C13 90 17 104 23 120" fill="none" stroke="#666" stroke-width=".6"/><path d="M40.600 55.600C37 58 34 59.500 32 62C28 66 25.500 69.500 23.900 72C20.500 78 18 85 16.700 91C16 96 17.500 108 21.500 120" fill="none" stroke="#444" stroke-width=".75"/></svg><svg class="abs" style="left:0;top:12px" width="29" height="10" viewBox="0 0 29 10"><path d="M0 0.800H23L27 4.900L23 9H0Z" fill="#dcdcdc"/><path d="M19.500 3.200l1.700 1.700-1.700 1.700" fill="none" stroke="#efefef" stroke-width=".8"/></svg><div class="ttl" style="right:23.5px;top:9.7px;font-size:9px;transform:scaleX(0.911) skewX(-14deg)">موقعيت شهرستان اسكو در استان</div><svg class="abs" style="left:56.400px;top:39px" width="63.600" height="65.400" viewBox="0 0 63.600 65.400"><rect width="63.600" height="65.400" fill="#222832"/>
<g fill="none" stroke="#6d737d" stroke-width=".55" stroke-linejoin="round" stroke-linecap="round">
<path d="M7.800 14.700L13.700 12.500L21 16.200L28.300 15.400L34.200 9.500L40.800 5.100L43.800 9.500L42.300 15.400L43.800 21.300L41.600 27.200L47.400 29.400L50.400 36L53.300 40.400L56.200 47.700L50.400 50.700L44.500 53.600L37.200 58L34.200 56.500L32.700 52.100L26.900 53.600L21 50.700L15.100 47.700L12.200 41.900L10.700 36L6.300 30.100L5.600 25.700L9.300 24.200L7.800 18.400Z"/>
<path d="M21 16.200L22 22L26.500 24.500L28.300 15.400M28.300 15.400L33.500 18L41 17.500M33.500 18L33 24.500L26.500 24.500M33 24.500L41.600 27.200M26.500 24.500L25.500 31L30 33.500L36.500 30L38 35L47.400 29.400M9.300 24.200L16 27L22 22M16 27L18 33M25.500 31L18 33M30 33.500L30.500 40L38 41L38 35M38 41L44 44L50.400 36M30.500 40L28 45L32.700 52.100M28 45L22 44L21 50.700M22 44L24 39M44 44L44.500 53.600M34 46L38 41M13 40L18 43L22 44"/>
</g>
<path d="M11.500 36.500C13.500 34.500 16 34 18 34.500C20 34 22 35 23 36.500C24.500 37.500 25.500 38.500 25.400 39.500" fill="none" stroke="#a9acb2" stroke-width="1.600" stroke-linecap="round"/>
</svg></div>
<div class="slide" style="left:33.5px;top:404.3px"><div class="bar"></div><svg class="wisp" width="70" height="120" viewBox="0 0 70 120"><path d="M53.700 23.400C43 31.700 31 42 24 58C19 69 16.500 78 15.500 88" fill="none" stroke="#d9d9d9" stroke-width=".9"/><path d="M9.500 24.600C8 36 7.800 46 8.400 55.600C9.500 70 11.500 82 13 91.400C14.500 100 16.500 108 19.500 120" fill="none" stroke="#888" stroke-width=".6"/><path d="M4.300 36.500C4.800 43 5.300 50 6 55.600C7.500 66 9 73 10.700 79.500C12.500 87 14.500 94 16.700 101C19 108 22 114 25 120" fill="none" stroke="#333" stroke-width=".85"/><path d="M4.300 44C5.500 56 7.500 68 10 78C13 90 17 104 23 120" fill="none" stroke="#666" stroke-width=".6"/><path d="M40.600 55.600C37 58 34 59.500 32 62C28 66 25.500 69.500 23.900 72C20.500 78 18 85 16.700 91C16 96 17.500 108 21.500 120" fill="none" stroke="#444" stroke-width=".75"/></svg><svg class="abs" style="left:0;top:12px" width="29" height="10" viewBox="0 0 29 10"><path d="M0 0.800H23L27 4.900L23 9H0Z" fill="#dcdcdc"/><path d="M19.500 3.200l1.700 1.700-1.700 1.700" fill="none" stroke="#efefef" stroke-width=".8"/></svg><div class="ttl" style="right:27.3px;top:9.7px;font-size:9px;transform:scaleX(0.931) skewX(-14deg)">موقعيت دهستان باونل در بخش</div><svg class="abs" style="left:57.500px;top:51px" width="57" height="54.300" viewBox="0 0 57 54.300"><rect width="57" height="54.300" fill="#222832"/>
<g fill="none" stroke="#6d737d" stroke-width=".55" stroke-linejoin="round" stroke-linecap="round">
<path d="M15.400 1C14 3 13 4.500 11.700 6.200C9 9 6 11.500 2.900 13.500C5 15.500 7 17 8.100 19.400C9 22.500 10 25.500 11 28.200C12 30.500 13.500 32.500 14.700 34C17.500 35.500 20.500 37 22.800 38.500C23.500 42 24.300 45.500 25 48.700C26 49.500 27.500 50 28.600 50.200C32.500 49 36.500 47.500 40.400 45.800C43 44.500 46 43 48.500 41.400C48.500 39.500 48 37.500 47.700 35.500C48.500 34 49 32.500 49.200 31.100C48 29 46.500 26.500 44.800 24.500C42.500 22.500 40 20.500 37.400 18.600C34 13 30.500 7 27.200 1Z"/>
<path d="M18.400 9.100C20 13 21.500 17 22.500 20C23.300 21.500 24 22.500 24.200 23.800C23 25.500 21.500 27 20.600 28.200C22.500 28.500 24 29 25.700 29.700C27.500 29.500 29.500 29.200 31.600 28.900M22.800 10.600C25 12.500 27.500 14.500 29.400 16.400C30.500 19.500 32 22.500 33 25.300C36.500 25.500 40 26 43.300 26.700M11.700 28.900C15.500 30.500 19.500 32 22.800 34C26 36.500 29.500 39 33 41.400M24.200 23.800C25 25 25.300 26.500 25.700 29.700"/>
</g>
<path d="M16.500 8.500L18.800 7.500L21 9.500L18.800 11Z" fill="#9ea2a9"/>
</svg></div>
<div class="slide" style="left:287px;top:404.3px"><div class="bar"></div><svg class="wisp" width="70" height="120" viewBox="0 0 70 120"><path d="M53.700 23.400C43 31.700 31 42 24 58C19 69 16.500 78 15.500 88" fill="none" stroke="#d9d9d9" stroke-width=".9"/><path d="M9.500 24.600C8 36 7.800 46 8.400 55.600C9.500 70 11.500 82 13 91.400C14.500 100 16.500 108 19.500 120" fill="none" stroke="#888" stroke-width=".6"/><path d="M4.300 36.500C4.800 43 5.300 50 6 55.600C7.500 66 9 73 10.700 79.500C12.500 87 14.500 94 16.700 101C19 108 22 114 25 120" fill="none" stroke="#333" stroke-width=".85"/><path d="M4.300 44C5.500 56 7.500 68 10 78C13 90 17 104 23 120" fill="none" stroke="#666" stroke-width=".6"/><path d="M40.600 55.600C37 58 34 59.500 32 62C28 66 25.500 69.500 23.900 72C20.500 78 18 85 16.700 91C16 96 17.500 108 21.500 120" fill="none" stroke="#444" stroke-width=".75"/></svg><svg class="abs" style="left:0;top:12px" width="29" height="10" viewBox="0 0 29 10"><path d="M0 0.800H23L27 4.900L23 9H0Z" fill="#dcdcdc"/><path d="M19.500 3.200l1.700 1.700-1.700 1.700" fill="none" stroke="#efefef" stroke-width=".8"/></svg><div class="ttl" style="right:32.7px;top:9.7px;font-size:9px;transform:scaleX(1.030) skewX(-14deg)">موقعيت روستا در دهستان</div><svg class="abs" style="left:55px;top:45.500px" width="60" height="61" viewBox="0 0 60 61"><rect width="60" height="61" fill="#222832"/>
<g fill="none" stroke="#6d737d" stroke-width=".55" stroke-linejoin="round" stroke-linecap="round">
<path d="M5.600 33.800L17.300 27.200C20 25.500 22.500 24 24.700 22C26 21 27 19.800 27.600 18.400C27.300 16.500 27.500 14.500 28.300 12.500C29.500 10.500 31.500 9 33.500 8.100C36 7.700 38.500 8.300 40.800 8.100L49.600 3.700L54.800 11.700L35 22C34 23 33 24 32.700 25C34 26 35.500 27.300 36.400 28.600C35.500 30.500 35 32.500 35 34.500C36.300 37 38 39.500 39.400 41.900L21.700 50.700C20 47.500 18.500 44.500 17.300 41.900Z"/>
<circle cx="29.100" cy="19.100" r="2.600"/><path d="M26.800 18.500h4.600"/><circle cx="25.400" cy="30.100" r="3"/><path d="M22.800 30h5.200"/><circle cx="25.700" cy="36.700" r="2.400"/><circle cx="25.700" cy="42.600" r="2.900"/>
<path d="M29 16.500C29 15 29.500 13.500 30.500 12.500M32 20.500L35 22"/>
</g>
</svg></div>
<div class="slide" style="left:540px;top:404.3px"><div class="bar"></div><svg class="wisp" width="70" height="120" viewBox="0 0 70 120"><path d="M53.700 23.400C43 31.700 31 42 24 58C19 69 16.500 78 15.500 88" fill="none" stroke="#d9d9d9" stroke-width=".9"/><path d="M9.500 24.600C8 36 7.800 46 8.400 55.600C9.500 70 11.500 82 13 91.400C14.500 100 16.500 108 19.500 120" fill="none" stroke="#888" stroke-width=".6"/><path d="M4.300 36.500C4.800 43 5.300 50 6 55.600C7.500 66 9 73 10.700 79.500C12.500 87 14.500 94 16.700 101C19 108 22 114 25 120" fill="none" stroke="#333" stroke-width=".85"/><path d="M4.300 44C5.500 56 7.500 68 10 78C13 90 17 104 23 120" fill="none" stroke="#666" stroke-width=".6"/><path d="M40.600 55.600C37 58 34 59.500 32 62C28 66 25.500 69.500 23.900 72C20.500 78 18 85 16.700 91C16 96 17.500 108 21.500 120" fill="none" stroke="#444" stroke-width=".75"/></svg><svg class="abs" style="left:0;top:12px" width="29" height="10" viewBox="0 0 29 10"><path d="M0 0.800H23L27 4.900L23 9H0Z" fill="#dcdcdc"/><path d="M19.500 3.200l1.700 1.700-1.700 1.700" fill="none" stroke="#efefef" stroke-width=".8"/></svg><div class="ttl" style="right:51.5px;top:7.9px;font-size:7.8px;transform:scaleX(0.894) skewX(-14deg)">موقعيت سياسي روستا</div><div class="abs" style="left:45.3px;top:38.4px;width:154.5px;height:8.600px;background:#d3d3d3"></div><div class="abs" style="left:45.3px;top:47.0px;width:154.5px;height:19px;background:#e7e7e7"></div><div class="abs" style="left:70.6px;top:38.4px;width:.8px;height:27.600px;background:#f6f6f6"></div><div class="abs" style="left:96.4px;top:38.4px;width:.8px;height:27.600px;background:#f6f6f6"></div><div class="abs" style="left:122.1px;top:38.4px;width:.8px;height:27.600px;background:#f6f6f6"></div><div class="abs" style="left:147.9px;top:38.4px;width:.8px;height:27.600px;background:#f6f6f6"></div><div class="abs" style="left:173.6px;top:38.4px;width:.8px;height:27.600px;background:#f6f6f6"></div><div class="abs" style="left:45.3px;top:46.6px;width:154.5px;height:.8px;background:#f6f6f6"></div><div class="cell" style="left:156.9px;top:37.7px;font-size:3.500px;color:#f4f4f4;transform:scaleX(0.846) skewX(-10deg)">نام روستا</div><div class="cell" style="left:131.2px;top:37.7px;font-size:3.500px;color:#f4f4f4;transform:scaleX(0.863) skewX(-10deg)">نام دهستان</div><div class="cell" style="left:105.4px;top:37.7px;font-size:3.500px;color:#f4f4f4;transform:scaleX(0.796) skewX(-10deg)">بخش</div><div class="cell" style="left:79.7px;top:37.7px;font-size:3.500px;color:#f4f4f4;transform:scaleX(0.760) skewX(-10deg)">شهرستان</div><div class="cell" style="left:53.9px;top:37.7px;font-size:3.500px;color:#f4f4f4;transform:scaleX(0.867) skewX(-10deg)">استان</div><div class="cell" style="left:28.2px;top:37.7px;font-size:3.500px;color:#f4f4f4;transform:scaleX(0.818) skewX(-10deg)">مركز بخش</div><div class="cell" style="left:156.9px;top:47.2px;font-size:4.500px;color:#222;transform:scaleX(0.913) skewX(-10deg)">كلجاه</div><div class="cell" style="left:131.2px;top:47.2px;font-size:4.500px;color:#222;transform:scaleX(0.757) skewX(-10deg)">باونل</div><div class="cell" style="left:105.4px;top:47.2px;font-size:4.500px;color:#222;transform:scaleX(0.727) skewX(-10deg)">مركزي</div><div class="cell" style="left:79.7px;top:47.2px;font-size:4.500px;color:#222;transform:scaleX(0.701) skewX(-10deg)">اسكو</div><div class="cell" style="left:53.9px;top:47.2px;font-size:4.500px;color:#222;transform:scaleX(0.739) skewX(-10deg)">آذربايجان</div><div class="cell" style="left:53.9px;top:53.6px;font-size:4.500px;color:#222;transform:scaleX(0.543) skewX(-10deg)">شرقي</div><div class="cell" style="left:28.2px;top:47.2px;font-size:4.500px;color:#222;transform:scaleX(0.701) skewX(-10deg)">اسكو</div></div>
<svg class="abs" style="left:32.5px;top:233.3px" width="10" height="9" viewBox="0 0 10 9"><path d="M5.800 0.700l1 2.300 2.600.2-2 1.700.7 2.600-2.300-1.400-2.300 1.400.7-2.600-2-1.700 2.600-.2z" fill="#e8eaee" stroke="#2e2e2e" stroke-width=".9"/><path d="M0.300 1.500h2.300M0.300 1.500v5.500h1.500" fill="none" stroke="#3a3a3a" stroke-width=".8" stroke-dasharray="1.2 .8"/></svg>
<div class="num" style="left:221.5px;top:229.8px">1</div>
<div class="num" style="left:475.0px;top:229.8px">2</div>
<svg class="abs" style="left:539px;top:233.3px" width="10" height="9" viewBox="0 0 10 9"><path d="M5.800 0.700l1 2.300 2.600.2-2 1.700.7 2.600-2.300-1.400-2.300 1.400.7-2.600-2-1.700 2.600-.2z" fill="#e8eaee" stroke="#2e2e2e" stroke-width=".9"/><path d="M0.300 1.500h2.300M0.300 1.500v5.500h1.500" fill="none" stroke="#3a3a3a" stroke-width=".8" stroke-dasharray="1.2 .8"/></svg>
<div class="num" style="left:728.0px;top:229.8px">3</div>
<svg class="abs" style="left:32.5px;top:383.3px" width="10" height="9" viewBox="0 0 10 9"><path d="M5.800 0.700l1 2.300 2.600.2-2 1.700.7 2.600-2.300-1.400-2.300 1.400.7-2.600-2-1.700 2.600-.2z" fill="#e8eaee" stroke="#2e2e2e" stroke-width=".9"/><path d="M0.300 1.500h2.300M0.300 1.500v5.500h1.500" fill="none" stroke="#3a3a3a" stroke-width=".8" stroke-dasharray="1.2 .8"/></svg>
<div class="num" style="left:221.5px;top:379.8px">4</div>
<svg class="abs" style="left:286px;top:383.3px" width="10" height="9" viewBox="0 0 10 9"><path d="M5.800 0.700l1 2.300 2.600.2-2 1.700.7 2.600-2.300-1.400-2.300 1.400.7-2.600-2-1.700 2.600-.2z" fill="#e8eaee" stroke="#2e2e2e" stroke-width=".9"/><path d="M0.300 1.500h2.300M0.300 1.500v5.500h1.500" fill="none" stroke="#3a3a3a" stroke-width=".8" stroke-dasharray="1.2 .8"/></svg>
<div class="num" style="left:475.0px;top:379.8px">5</div>
<svg class="abs" style="left:539px;top:383.3px" width="10" height="9" viewBox="0 0 10 9"><path d="M5.800 0.700l1 2.300 2.600.2-2 1.700.7 2.600-2.300-1.400-2.300 1.400.7-2.600-2-1.700 2.600-.2z" fill="#e8eaee" stroke="#2e2e2e" stroke-width=".9"/><path d="M0.300 1.500h2.300M0.300 1.500v5.500h1.500" fill="none" stroke="#3a3a3a" stroke-width=".8" stroke-dasharray="1.2 .8"/></svg>
<div class="num" style="left:728.0px;top:379.8px">6</div>
<!--SLIDESEND-->
<!--STATUS-->
<!-- scrollbar -->
<div class="abs" style="left:785px;top:97px;width:15px;height:432px;background:linear-gradient(90deg,#d3d8e0,#e3e7ed 40%,#e6eaf0)"></div>
<div class="abs" style="left:788px;top:101px;width:0;height:0;border-left:4.500px solid transparent;border-right:4.500px solid transparent;border-bottom:5px solid #3a3f47"></div>
<div class="abs" style="left:787px;top:111px;width:12px;height:50px;box-sizing:border-box;border:1px solid #9ea6b2;border-radius:2px;background:linear-gradient(90deg,#f7f8fa,#e8ebf0 50%,#dde1e8)"></div>
<div class="abs" style="left:790px;top:133px;width:6px;height:1px;background:#8d95a1;box-shadow:0 2px 0 #8d95a1,0 4px 0 #8d95a1"></div>
<div class="abs" style="left:788px;top:521px;width:0;height:0;border-left:4.500px solid transparent;border-right:4.500px solid transparent;border-top:5px solid #3a3f47"></div>
<!-- status bar -->
<div class="abs" style="left:0;top:528px;width:800px;height:18px;box-sizing:border-box;border-top:1px solid #9aa1ab;background:linear-gradient(#e2e6ec,#d3d8df 55%,#c9ced6)"></div>
<div class="t" style="left:6px;top:532px;color:#2c3440">Slide Sorter</div>
<div class="abs" style="left:63px;top:530px;width:1px;height:15px;background:#aab0ba;box-shadow:1px 0 0 #eef0f3"></div>
<div class="t" style="left:72px;top:532px;color:#2c3440">"Wisp"</div>
<div class="abs" style="left:107px;top:530px;width:1px;height:15px;background:#aab0ba;box-shadow:1px 0 0 #eef0f3"></div>
<div class="t" style="left:115px;top:532px;color:#2c3440">English (U.S.)</div>
<div class="abs" style="left:178px;top:530px;width:1px;height:15px;background:#aab0ba;box-shadow:1px 0 0 #eef0f3"></div>
<div class="abs" style="left:555px;top:530px;width:1px;height:15px;background:#aab0ba;box-shadow:1px 0 0 #eef0f3"></div>
<svg class="abs" style="left:562.500px;top:534px" width="11" height="9" viewBox="0 0 11 9"><rect x="0.500" y="0.500" width="10" height="8" fill="#fff" stroke="#4a5260"/><path d="M4 0.500v8M0.500 3h3.500M0.500 5.500h3.500" stroke="#4a5260"/></svg>
<div class="abs" style="left:576.500px;top:531px;width:14px;height:14px;box-sizing:border-box;border:1px solid #e2b432;border-radius:2px;background:linear-gradient(#fdeea6,#fbd768 50%,#f9c942)"></div>
<svg class="abs" style="left:579px;top:534px" width="9" height="9" viewBox="0 0 9 9"><g fill="#fffdf2" stroke="#5a5238" stroke-width=".9"><rect x="0.500" y="0.500" width="3" height="3"/><rect x="5.500" y="0.500" width="3" height="3"/><rect x="0.500" y="5.500" width="3" height="3"/><rect x="5.500" y="5.500" width="3" height="3"/></g></svg>
<svg class="abs" style="left:593.500px;top:534px" width="10" height="9" viewBox="0 0 10 9"><path d="M0.500 1l4.500 1.200 4.500-1.200v6.300l-4.500 1.200-4.500-1.200z" fill="#fff" stroke="#6a7280" stroke-width=".8"/><path d="M5 2.200v6.300M2 3.300l1.500.5M2 5l1.500.5M6.500 3.800l1.500-.5M6.500 5.500l1.500-.5" stroke="#6a7280" stroke-width=".6"/></svg>
<svg class="abs" style="left:609.500px;top:534px" width="10" height="9" viewBox="0 0 10 9"><path d="M0.500 0.500h9M1.500 0.500v4.500h7v-4.500" fill="#fff" stroke="#4a5260"/><path d="M5 5v2M3 8.500l2-1.500 2 1.500" fill="none" stroke="#4a5260" stroke-width=".9"/></svg>
<div class="t" style="left:629px;top:532px;color:#2c3440">80%</div>
<div class="abs" style="left:653.500px;top:532px;width:13px;height:13px;box-sizing:border-box;border:1px solid #5c6470;border-radius:50%;background:radial-gradient(circle at 50% 30%,#fff,#dfe3e9)"></div><div class="abs" style="left:657px;top:537.500px;width:6px;height:2px;background:#3a424e"></div>
<div class="abs" style="left:667px;top:538px;width:83px;height:1px;background:#7d8592;box-shadow:0 1px 0 #f1f3f6"></div>
<div class="abs" style="left:707.500px;top:535px;width:1px;height:7px;background:#7d8592"></div>
<svg class="abs" style="left:695.500px;top:532.500px" width="8" height="11" viewBox="0 0 8 11"><path d="M0.500 0.500h7v6.500l-3.500 3.500-3.500-3.500z" fill="#f4f6f9" stroke="#5c6470"/></svg>
<div class="abs" style="left:750px;top:532px;width:13px;height:13px;box-sizing:border-box;border:1px solid #5c6470;border-radius:50%;background:radial-gradient(circle at 50% 30%,#fff,#dfe3e9)"></div><div class="abs" style="left:753.500px;top:537.500px;width:6px;height:2px;background:#3a424e"></div><div class="abs" style="left:755.500px;top:535.500px;width:2px;height:6px;background:#3a424e"></div>
<svg class="abs" style="left:769px;top:532px" width="14" height="12" viewBox="0 0 14 12"><rect x="0.500" y="0.500" width="13" height="11" fill="#5a616c" stroke="#3f4650"/><path d="M2 2h3l-1 1 2 1.500-.8 1-2.200-1.500-1 1zM12 2v3l-1-1-2 1.500-.8-1 2.200-1.500-1-1zM2 10v-3l1 1 2-1.500.8 1-2.200 1.500 1 1zM12 10h-3l1-1-2-1.500.8-1 2.200 1.500 1-1z" fill="#f2f4f7"/><rect x="6" y="5" width="2" height="2" fill="#f2f4f7"/></svg>
<svg class="abs" style="left:789px;top:535px" width="10" height="10" viewBox="0 0 10 10"><g fill="#9aa1ab"><rect x="7" y="1" width="2" height="2"/><rect x="4" y="4" width="2" height="2"/><rect x="7" y="4" width="2" height="2"/><rect x="1" y="7" width="2" height="2"/><rect x="4" y="7" width="2" height="2"/><rect x="7" y="7" width="2" height="2"/></g></svg>
<!--STATUSEND-->
</body></html>
